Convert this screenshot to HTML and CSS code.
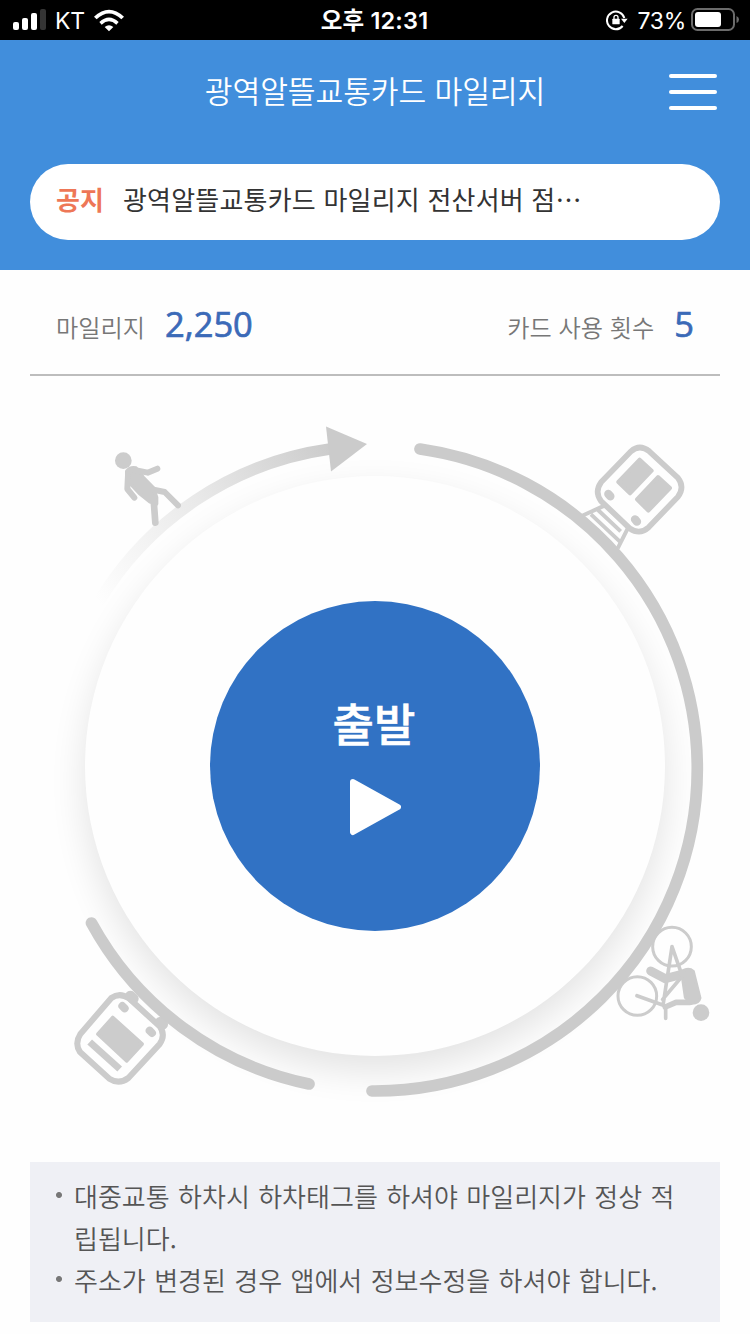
FILE: index.html
```html
<!DOCTYPE html>
<html lang="ko">
<head>
<meta charset="utf-8">
<title>광역알뜰교통카드 마일리지</title>
<link rel="stylesheet" href="styles.css">
</head>
<body>
<div class="status">
  <div class="status-left">
    <svg class="signal" width="34" height="22" viewBox="0 0 34 22"><g fill="#fff"><rect x="0" y="13" width="6" height="8" rx="2"/><rect x="9" y="9" width="6" height="12" rx="2"/><rect x="18" y="4" width="6" height="17" rx="2"/><rect x="27" y="0" width="6" height="21" rx="2" fill="#343434"/></g></svg>
    <span class="carrier">KT</span>
    <svg class="wifi" width="30" height="23" viewBox="0 0 90 69"><path fill="#fff" d="M45 67 L32 54 Q45 43 58 54 Z M16 39 Q45 12 74 39 L67 47 Q45 27 23 47 Z M0 23 Q45 -19 90 23 L82 31 Q45 -4 8 31 Z"/></svg>
  </div>
  <div class="clock">오후 12:31</div>
  <div class="status-right">
    <svg width="22" height="22" viewBox="0 0 66 66"><g fill="none" stroke="#fff" stroke-width="6"><path d="M50 51 A26.500 26.500 0 1 1 55 27"/><path d="M24 32 V25 A6 6 0 0 1 36 25 V32" stroke-width="4"/></g><rect x="19" y="29" width="22" height="17" rx="2" fill="#fff"/><path d="M45 29 H65 L55 42 Z" fill="#fff"/></svg>
    <span class="percent">73%</span>
    <svg class="battery" width="48" height="24" viewBox="0 0 48 24"><rect x="1" y="1" width="42" height="21" rx="5.5" fill="none" stroke="#6b6b6b" stroke-width="2"/><rect x="4" y="4" width="26" height="15" rx="3" fill="#fff"/><path d="M45.500 8 Q48 9 48 11.500 Q48 14 45.500 15 Z" fill="#6b6b6b"/></svg>
  </div>
</div>
<header class="header">
  <div class="titlebar">
    <h1 class="title">광역알뜰교통카드 마일리지</h1>
    <div class="menu"><i class="menu-line"></i><i class="menu-line"></i><i class="menu-line"></i></div>
  </div>
  <div class="notice"><strong class="notice-tag">공지</strong><span class="notice-text">광역알뜰교통카드 마일리지 전산서버 점⋯</span></div>
</header>
<section class="stats">
  <div class="stat"><span class="stat-label">마일리지</span><span class="stat-value">2,250</span></div>
  <div class="stat"><span class="stat-label">카드 사용 횟수</span><span class="stat-value">5</span></div>
</section>
<main class="dial">
  <div class="disc"></div>
  <svg class="route" width="750" height="786" viewBox="0 376 750 786">
    <defs>
      <linearGradient id="fade" gradientUnits="userSpaceOnUse" x1="97" y1="600" x2="330" y2="448"><stop offset="0" stop-color="#ccc" stop-opacity="0"/><stop offset=".5" stop-color="#ccc" stop-opacity=".42"/><stop offset="1" stop-color="#ccc"/></linearGradient>
    </defs>
    <!-- train -->
    <g class="soft" transform="translate(390 410) scale(.33333)">
      <g stroke="#ccc" fill="none">
        <path d="M723 124 Q749 101 778 124 L864 204 Q885 231 864 260 L776 352 Q749 376 719 355 L633 273 Q613 246 633 217 Z" stroke-width="17"/>
        <path d="M645 286 L575 318 M716 350 L683 415 M624 300 L692 364 M603 313 L689 394" stroke-width="12"/>
      </g>
      <g fill="#ccc" stroke="#ccc" stroke-linejoin="round" stroke-width="12">
        <path d="M749 149 L785 182 L720 250 L685 216 Z M804 201 L840 234 L775 302 L741 268 Z"/>
        <path d="M655 252 L661 259 M735 328 L741 335" stroke-width="25" stroke-linecap="round"/>
      </g>
    </g>
    <!-- bus -->
    <g class="soft" transform="translate(50 890) scale(.33333)">
      <path d="M184 324 Q209 306 237 325 L329 409 Q348 435 329 462 L235 564 Q207 585 178 566 L90 486 Q73 460 91 432 Z" fill="none" stroke="#ccc" stroke-width="18"/>
      <path d="M188 382 L277 462 L230 513 L143 432 Z" fill="#ccc" stroke="#ccc" stroke-width="10" stroke-linejoin="round"/>
      <path d="M119 456 L209 537" stroke="#ccc" stroke-width="21"/>
      <g stroke="#ccc" stroke-linecap="round" stroke-width="24"><path d="M217 348 L224 355 M299 422 L306 429"/><path d="M241 318 L250 326 M330 397 L338 403" stroke-width="32"/></g>
    </g>
    <!-- cyclist -->
    <g class="soft" transform="translate(560 860) scale(.33333)" fill="none" stroke="#ccc" stroke-linecap="round" stroke-linejoin="round">
      <circle cx="336" cy="260" r="58" stroke-width="9"/><circle cx="232" cy="408" r="58" stroke-width="9"/>
      <path d="M336 260 L310 430 M336 260 L362 334 M231 407 L310 436 M317 440 V475 M362 354 L308 418" stroke-width="11"/>
      <path d="M272 333 L316 356 L374 341" stroke-width="27"/>
      <path d="M316 441 L348 427 L390 427" stroke-width="17"/>
      <path d="M359 340 Q383 320 400 334 L420 414 Q416 431 394 430 L376 412 L367 350 Z" fill="#ccc" stroke-width="9"/>
      <circle cx="423" cy="458" r="25" fill="#ccc" stroke="none"/>
    </g>
    <g fill="none" stroke="#cbcbcb" stroke-width="11.700" stroke-linecap="round">
      <path d="M420 449 A322.500 322.500 0 0 1 697.300 769 A322.300 322.300 0 0 1 372 1091"/>
      <path d="M309 1084 A322.300 322.300 0 0 1 91.500 923"/>
      <path d="M97.500 604 A322.300 322.300 0 0 1 330 449" stroke="url(#fade)" stroke-linecap="butt"/>
    </g>
    <path d="M326 426.500 L367 444 L331 471.500 Z" fill="#cbcbcb"/>
    <!-- pedestrian -->
    <g class="soft" transform="translate(60 410) scale(.33333)" fill="none" stroke="#ccc" stroke-linecap="round" stroke-linejoin="round">
      <circle cx="190" cy="152" r="25" fill="#ccc" stroke="none"/>
      <path d="M200 184 Q210 170 228 174 L250 202 L280 233 L290 262 L290 282 L270 276 L238 250 L212 222 L200 212 Z" fill="#ccc" stroke-width="10"/>
      <path d="M223 180 L263 188 L292 176 M204 196 L202 237 L223 263" stroke-width="18"/>
      <path d="M281 270 L286 338" stroke-width="20"/><path d="M270 237 L314 246 L354 286" stroke-width="18"/>
    </g>
  </svg>
  <div class="start">
    <span class="start-label">출발</span>
    <svg width="52" height="58" viewBox="0 0 52 58"><path d="M4 4 L49 29 L4 54 Z" fill="#fff" stroke="#fff" stroke-width="6" stroke-linejoin="round"/></svg>
  </div>
</main>
<ul class="tips">
  <li class="tip">대중교통 하차시 하차태그를 하셔야 마일리지가 정상 적<br>립됩니다.</li>
  <li class="tip">주소가 변경된 경우 앱에서 정보수정을 하셔야 합니다.</li>
</ul>
</body>
</html>
```
FILE: styles.css
```css
* { box-sizing: border-box; }
body {
  margin: 0;
  width: 750px;
  height: 1334px;
  overflow: hidden;
  background: #fefefe;
  font-family: "Noto Sans CJK KR", sans-serif;
}
svg { display: block; flex: none; }
.status {
  display: grid;
  grid-template-columns: 1fr auto 1fr;
  align-items: center;
  height: 40px;
  padding: 0 11px 0 13px;
  background: #000;
  color: #fff;
  font: 23px/38px Inter, "Noto Sans CJK KR", sans-serif;
}
.status-left, .status-right { display: flex; align-items: center; height: 40px; }
.status-right { justify-content: flex-end; padding-bottom: 1px; }
.carrier { margin: 1px 9px 0 8px; letter-spacing: -.3px; }
.clock { padding: 1px 3px 0 0; font-weight: 600; font-size: 23.500px; letter-spacing: .2px; }
.percent { margin: 2px 5px 0 9px; letter-spacing: -.3px; }
.header { height: 230px; background: #418edc; }
.titlebar {
  display: grid;
  grid-template-columns: 1fr auto 1fr;
  align-items: center;
  height: 104px;
  padding: 0 33px;
}
.title {
  grid-column: 2;
  margin: 0;
  padding-bottom: 4px;
  color: #fff;
  font-size: 30.200px;
  font-weight: 350;
  line-height: 44px;
  letter-spacing: -.1px;
}
.menu {
  justify-self: end;
  display: flex;
  flex-direction: column;
  gap: 12.500px;
  width: 48px;
}
.menu-line { height: 3.500px; border-radius: 2px; background: #fff; }
.notice {
  display: flex;
  align-items: center;
  height: 76px;
  margin: 20px 30px 0;
  padding: 0 26px 8px;
  border-radius: 38px;
  background: #fff;
  font-size: 26px;
  white-space: nowrap;
}
.notice-tag { width: 67px; color: #ee7757; }
.notice-text { color: #333; font-weight: 400; letter-spacing: .2px; }
.stats {
  display: flex;
  justify-content: space-between;
  height: 106px;
  margin: 0 30px;
  padding: 27px 26px 0;
  border-bottom: 2px solid #bdbdbd;
}
.stat { display: flex; align-items: baseline; height: 54px; line-height: 54px; }
.stat-label { margin-right: 20px; color: #777; font-size: 24.200px; font-weight: 350; }
.stat-value {
  color: #3b6ab8;
  font-family: "Open Sans", sans-serif;
  font-size: 34.500px;
  font-weight: 500;
  -webkit-text-stroke: .7px #3b6ab8;
}
.dial { display: grid; height: 786px; }
.disc, .route, .start { grid-area: 1 / 1; }
.disc {
  width: 580px;
  height: 580px;
  margin: 100px 85px;
  border-radius: 50%;
  background: #fefefe;
  box-shadow: 0 15px 36px rgba(0, 0, 0, .11);
}
.soft { filter: blur(1.500px); }
.start {
  display: flex;
  flex-direction: column;
  align-items: center;
  width: 330px;
  height: 330px;
  margin: 225px 210px;
  padding-top: 92px;
  border-radius: 50%;
  background: #3172c4;
  color: #fff;
}
.start-label {
  height: 85px;
  padding-right: 2px;
  font-size: 45px;
  font-weight: 500;
  line-height: 60px;
  -webkit-text-stroke: .5px #fff;
}
.tips {
  height: 160px;
  margin: 0 30px;
  padding: 13px 26px 0;
  background: #eff0f5;
  list-style: none;
  color: #555;
  font-size: 26px;
  font-weight: 350;
  line-height: 42px;
  white-space: nowrap;
}
.tip {
  padding-left: 18px;
  word-spacing: 1.100px;
  background: radial-gradient(circle, #777 2.500px, transparent 3.500px) -1px 16px / 8px 8px no-repeat;
}
```
